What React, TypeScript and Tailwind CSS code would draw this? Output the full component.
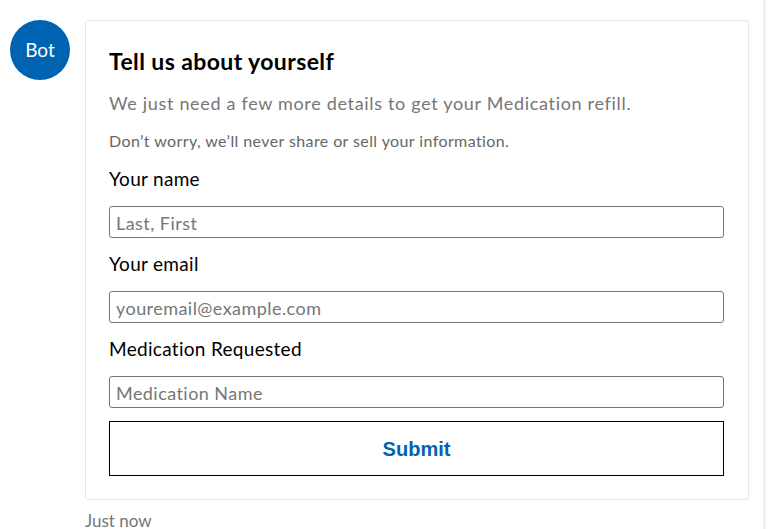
import React from "react";

const Field = ({
  label,
  placeholder,
  first,
}: {
  label: string;
  placeholder: string;
  first?: boolean;
}) => (
  <>
    <label
      className={`${first ? "mt-[14px]" : "mt-[13px]"} h-[26px] leading-[26px] text-[19px] tracking-[0.3px] text-black`}
    >
      {label}
    </label>
    <input
      type="text"
      placeholder={placeholder}
      className="mt-[14px] h-[32px] w-full rounded-[3px] border border-[#767676] px-[6px] pt-[2px] text-[18px] tracking-[0.45px] text-black placeholder:text-[#767676] outline-none font-['Lato']"
    />
  </>
);

export default function App() {
  return (
    <div className="flex h-[529px] w-[781px] bg-white font-['Lato',sans-serif]">
      <div className="flex w-[763px] flex-col pl-[10px] pt-[20px]">
        <div className="flex gap-[15px]">
          {/* Avatar */}
          <div className="flex h-[60px] w-[60px] shrink-0 items-center justify-center rounded-full bg-[#0063b1] text-[19px] text-white">
            Bot
          </div>

          <div className="flex flex-col">
            {/* Card */}
            <div className="flex w-[664px] flex-col rounded-[3px] border border-[#e6e6e6] bg-white pl-[23px] pr-[24px] pt-[25px] pb-[23px]">
              <h2 className="h-[30px] text-[23px] font-bold leading-[30px] tracking-[0.4px] text-black">
                Tell us about yourself
              </h2>
              <p className="mt-[14px] h-[26px] text-[18px] leading-[26px] tracking-[0.68px] text-[#767676]">
                We just need a few more details to get your Medication refill.
              </p>
              <p className="mt-[14px] h-[22px] text-[16px] leading-[22px] tracking-[0.4px] text-[#666666]">
                Don’t worry, we’ll never share or sell your information.
              </p>

              <Field label="Your name" placeholder="Last, First" first />
              <Field label="Your email" placeholder="youremail@example.com" />
              <Field label="Medication Requested" placeholder="Medication Name" />

              <button className="mt-[13px] h-[55px] w-full border border-black bg-white font-['Liberation_Sans',Arial,sans-serif] text-[20px] font-bold text-[#0063b1]">
                Submit
              </button>
            </div>

            <span className="mt-[11px] h-[20px] text-[17px] leading-[20px] text-[#767676]">
              Just now
            </span>
          </div>
        </div>
      </div>
      <div className="h-[529px] w-[3px] bg-[#f0f0f0]" />
    </div>
  );
}
